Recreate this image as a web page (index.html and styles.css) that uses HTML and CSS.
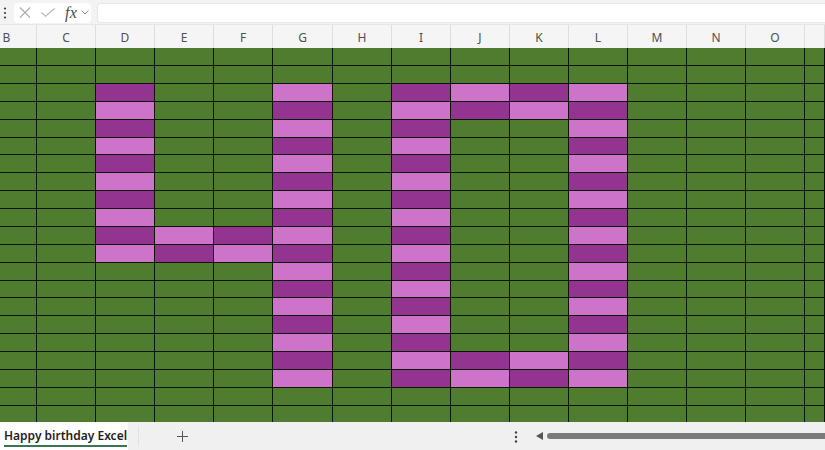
FILE: index.html
```html
<!DOCTYPE html>
<html lang="en">
<head>
<meta charset="utf-8">
<title>Happy birthday Excel</title>
<link rel="stylesheet" href="styles.css">
</head>
<body>
<div class="app">
  <div class="formula-bar">
    <svg class="grip" width="4" height="12" viewBox="0 0 4 12"><circle cx="2" cy="1.5" r="1.1"/><circle cx="2" cy="6" r="1.1"/><circle cx="2" cy="10.5" r="1.1"/></svg>
    <div class="fx-group">
      <svg class="ico-x" width="12" height="11" viewBox="0 0 12 11"><path d="M1 0.5 L11 10.5 M11 0.5 L1 10.5"/></svg>
      <svg class="ico-check" width="14" height="9" viewBox="0 0 14 9"><path d="M0.5 4.5 L4.5 8.3 L13.5 0.5"/></svg>
      <span class="fx">fx</span>
      <svg class="ico-chev" width="8" height="5" viewBox="0 0 8 5"><path d="M0.5 0.5 L4 4 L7.5 0.5"/></svg>
    </div>
    <div class="formula-input"></div>
  </div>

  <div class="col-headers">
    <span class="first">B</span><span>C</span><span>D</span><span>E</span><span>F</span><span>G</span><span>H</span><span>I</span><span>J</span><span>K</span><span>L</span><span>M</span><span>N</span><span>O</span><span></span>
  </div>

  <div class="sheet">
    <div class="row"><i></i><i></i><i></i><i></i><i></i><i></i><i></i><i></i><i></i><i></i><i></i><i></i><i></i><i></i><i></i></div>
    <div class="row"><i></i><i></i><i></i><i></i><i></i><i></i><i></i><i></i><i></i><i></i><i></i><i></i><i></i><i></i><i></i></div>
    <div class="row"><i></i><i></i><i class="d"></i><i></i><i></i><i class="l"></i><i></i><i class="d"></i><i class="l"></i><i class="d"></i><i class="l"></i><i></i><i></i><i></i><i></i></div>
    <div class="row"><i></i><i></i><i class="l"></i><i></i><i></i><i class="d"></i><i></i><i class="l"></i><i class="d"></i><i class="l"></i><i class="d"></i><i></i><i></i><i></i><i></i></div>
    <div class="row"><i></i><i></i><i class="d"></i><i></i><i></i><i class="l"></i><i></i><i class="d"></i><i></i><i></i><i class="l"></i><i></i><i></i><i></i><i></i></div>
    <div class="row short"><i></i><i></i><i class="l"></i><i></i><i></i><i class="d"></i><i></i><i class="l"></i><i></i><i></i><i class="d"></i><i></i><i></i><i></i><i></i></div>
    <div class="row"><i></i><i></i><i class="d"></i><i></i><i></i><i class="l"></i><i></i><i class="d"></i><i></i><i></i><i class="l"></i><i></i><i></i><i></i><i></i></div>
    <div class="row"><i></i><i></i><i class="l"></i><i></i><i></i><i class="d"></i><i></i><i class="l"></i><i></i><i></i><i class="d"></i><i></i><i></i><i></i><i></i></div>
    <div class="row"><i></i><i></i><i class="d"></i><i></i><i></i><i class="l"></i><i></i><i class="d"></i><i></i><i></i><i class="l"></i><i></i><i></i><i></i><i></i></div>
    <div class="row"><i></i><i></i><i class="l"></i><i></i><i></i><i class="d"></i><i></i><i class="l"></i><i></i><i></i><i class="d"></i><i></i><i></i><i></i><i></i></div>
    <div class="row"><i></i><i></i><i class="d"></i><i class="l"></i><i class="d"></i><i class="l"></i><i></i><i class="d"></i><i></i><i></i><i class="l"></i><i></i><i></i><i></i><i></i></div>
    <div class="row"><i></i><i></i><i class="l"></i><i class="d"></i><i class="l"></i><i class="d"></i><i></i><i class="l"></i><i></i><i></i><i class="d"></i><i></i><i></i><i></i><i></i></div>
    <div class="row"><i></i><i></i><i></i><i></i><i></i><i class="l"></i><i></i><i class="d"></i><i></i><i></i><i class="l"></i><i></i><i></i><i></i><i></i></div>
    <div class="row short"><i></i><i></i><i></i><i></i><i></i><i class="d"></i><i></i><i class="l"></i><i></i><i></i><i class="d"></i><i></i><i></i><i></i><i></i></div>
    <div class="row"><i></i><i></i><i></i><i></i><i></i><i class="l"></i><i></i><i class="d"></i><i></i><i></i><i class="l"></i><i></i><i></i><i></i><i></i></div>
    <div class="row"><i></i><i></i><i></i><i></i><i></i><i class="d"></i><i></i><i class="l"></i><i></i><i></i><i class="d"></i><i></i><i></i><i></i><i></i></div>
    <div class="row"><i></i><i></i><i></i><i></i><i></i><i class="l"></i><i></i><i class="d"></i><i></i><i></i><i class="l"></i><i></i><i></i><i></i><i></i></div>
    <div class="row"><i></i><i></i><i></i><i></i><i></i><i class="d"></i><i></i><i class="l"></i><i class="d"></i><i class="l"></i><i class="d"></i><i></i><i></i><i></i><i></i></div>
    <div class="row"><i></i><i></i><i></i><i></i><i></i><i class="l"></i><i></i><i class="d"></i><i class="l"></i><i class="d"></i><i class="l"></i><i></i><i></i><i></i><i></i></div>
    <div class="row"><i></i><i></i><i></i><i></i><i></i><i></i><i></i><i></i><i></i><i></i><i></i><i></i><i></i><i></i><i></i></div>
    <div class="row last"><i></i><i></i><i></i><i></i><i></i><i></i><i></i><i></i><i></i><i></i><i></i><i></i><i></i><i></i><i></i></div>
  </div>

  <div class="status-bar">
    <div class="sheet-tab"><span class="tab-label">Happy birthday Excel</span></div>
    <div class="tab-sep"></div>
    <svg class="add" width="11" height="11" viewBox="0 0 11 11"><path d="M5.5 0 V11 M0 5.5 H11"/></svg>
    <div class="spacer"></div>
    <svg class="grip2" width="4" height="12" viewBox="0 0 4 12"><circle cx="2" cy="1.5" r="1.2"/><circle cx="2" cy="6" r="1.2"/><circle cx="2" cy="10.5" r="1.2"/></svg>
    <svg class="arrow" width="7" height="8" viewBox="0 0 7 8"><path d="M7 0 L0 4 L7 8 Z"/></svg>
    <div class="hscroll"></div>
  </div>
</div>
</body>
</html>
```

FILE: styles.css
```css
* { box-sizing: border-box; }

html, body {
  margin: 0;
  padding: 0;
}

body {
  width: 825px;
  height: 450px;
  overflow: hidden;
  background: #f3f3f3;
  font-family: "Segoe UI", "Noto Sans", "Open Sans", sans-serif;
}

.app {
  display: flex;
  flex-direction: column;
  width: 825px;
  height: 450px;
}

/* ---------- formula bar ---------- */
.formula-bar {
  height: 25px;
  flex: none;
  display: flex;
  align-items: center;
  padding: 1px 0 0 3px;
  background: #f3f3f3;
  border-bottom: 1px solid #e6e6e6;
}

.grip {
  fill: #3c3c3c;
  flex: none;
}

.fx-group {
  margin-left: 7px;
  width: 77px;
  height: 20px;
  background: #fff;
  border-radius: 4px;
  display: flex;
  align-items: center;
  padding-left: 5px;
  flex: none;
}

.ico-x {
  stroke: #ababab;
  stroke-width: 1.1;
  fill: none;
}

.ico-check {
  margin-left: 10px;
  stroke: #b3b3b3;
  stroke-width: 1.1;
  fill: none;
}

.fx {
  margin-left: 10px;
  font-family: "Liberation Serif", "DejaVu Serif", serif;
  font-style: italic;
  font-size: 16px;
  line-height: 16px;
  color: #4a4a4a;
  letter-spacing: 0.3px;
}

.ico-chev {
  margin-left: 4px;
  stroke: #8c8c8c;
  stroke-width: 1;
  fill: none;
}

.formula-input {
  margin-left: 6px;
  flex: 1;
  height: 20px;
  background: #fff;
  border: 1px solid #e8e8e8;
  border-right: none;
  border-radius: 4px 0 0 4px;
}

/* ---------- column headers ---------- */
.col-headers {
  height: 23px;
  flex: none;
  display: grid;
  grid-template-columns: 37px 59px 59px 59px 59px 60px 59px 59px 59px 59px 59px 59px 59px 59px 1fr;
  background: #f5f5f5;
}

.col-headers span {
  display: flex;
  align-items: center;
  justify-content: center;
  padding-top: 2px;
  font-size: 12px;
  color: #505050;
  border-right: 1px solid #dedede;
}

.col-headers span.first {
  padding-right: 23px;
}

/* ---------- sheet grid ---------- */
.sheet {
  height: 374px;
  flex: none;
  overflow: hidden;
  background: #4f7c2e;
}

.row {
  display: grid;
  grid-template-columns: 37px 59px 59px 59px 59px 60px 59px 59px 59px 59px 59px 59px 59px 59px 1fr;
  height: 18px;
}

.row.short { height: 17px; }
.row.last { height: 16px; }

.row i {
  display: block;
  background: #4f7c2e;
  border-right: 1px solid #0b1505;
  border-bottom: 1px solid #0b1505;
}

.row.last i { border-bottom: none; }

.row i.d { background: #933491; }
.row i.l { background: #cd73ca; }

/* ---------- status bar ---------- */
.status-bar {
  flex: 1;
  display: flex;
  align-items: center;
  background: #f0f0f0;
}

.sheet-tab {
  width: 128px;
  height: 100%;
  background: #fff;
  display: flex;
  align-items: center;
  padding-left: 4px;
  flex: none;
}

.tab-label {
  font-size: 12px;
  font-weight: 600;
  color: #1e1e1e;
  line-height: 18px;
  padding-top: 2px;
  border-bottom: 2px solid #3f7352;
  white-space: nowrap;
}

.tab-sep {
  margin-left: 10px;
  width: 1px;
  height: 20px;
  background: #e2e2e2;
  flex: none;
}

.add {
  margin-left: 38px;
  stroke: #555;
  stroke-width: 1;
  fill: none;
  flex: none;
}

.spacer {
  width: 326px;
  flex: none;
}

.grip2 {
  fill: #444;
  flex: none;
  margin-top: 2px;
}

.arrow {
  margin-left: 18px;
  fill: #555;
  flex: none;
}

.hscroll {
  margin-left: 4px;
  flex: 1;
  height: 6px;
  background: #7a7a7a;
  border-radius: 3px 0 0 3px;
}
```
